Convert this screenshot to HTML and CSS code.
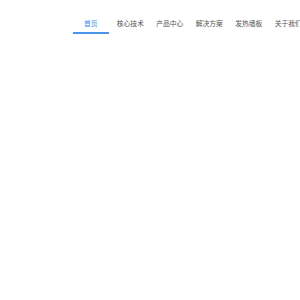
FILE: index.html
```html
<!DOCTYPE html>
<html lang="zh-CN">
<head>
  <meta charset="UTF-8" />
  <meta name="viewport" content="width=device-width, initial-scale=1.0" />
  <title>首页</title>
  <link rel="stylesheet" href="styles.css">
</head>
<body>
  <div class="header">
    <ul class="nav">
      <li class="nav-item active">首页</li>
      <li class="nav-item">核心技术</li>
      <li class="nav-item">产品中心</li>
      <li class="nav-item">解决方案</li>
      <li class="nav-item">发热墙板</li>
      <li class="nav-item">关于我们</li>
    </ul>
  </div>
</body>
</html>
```
FILE: styles.css
```css
* {
  box-sizing: border-box;
  margin: 0;
  padding: 0;
}
body {
  font-family: "Noto Sans CJK SC", "Noto Sans", sans-serif;
  background: #fff;
  color: #555;
  overflow: hidden;
}
.header {
  padding-top: 16px;
}
.nav {
  list-style: none;
  display: flex;
  padding-left: 71px;
  white-space: nowrap;
}
.nav-item {
  flex: 0 0 39.5px;
  text-align: center;
  font-size: 6.8px;
  line-height: 14px;
  padding-bottom: 4px;
  position: relative;
}
.nav-item.active {
  color: #3d8be8;
}
.nav-item.active::after {
  content: "";
  position: absolute;
  left: 2px;
  right: 2px;
  bottom: 0;
  height: 2px;
  background: #4a94ea;
}
```
